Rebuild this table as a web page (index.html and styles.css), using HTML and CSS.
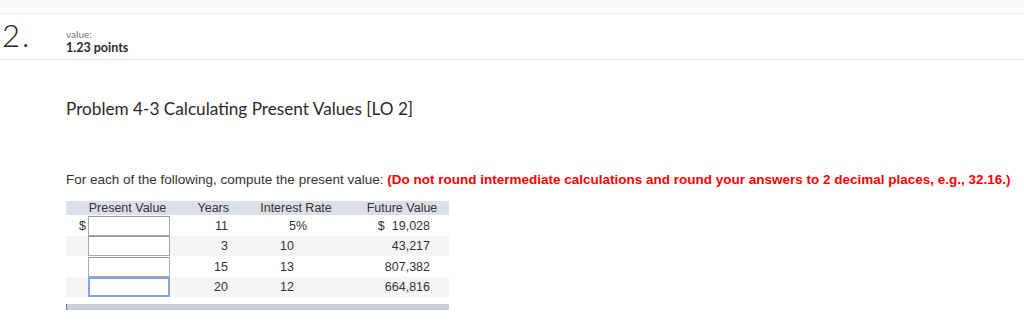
FILE: index.html
```html
<!DOCTYPE html>
<html>
<head>
<meta charset="utf-8">
<link rel="stylesheet" href="styles.css">
</head>
<body>
<div class="topbar"></div>
<div class="qhead">
  <div class="qnum">2.</div>
  <div class="qmeta">
    <div class="qlabel">value:</div>
    <div class="qpoints">1.23 points</div>
  </div>
</div>
<div class="content">
  <h1 class="title">Problem 4-3 Calculating Present Values [LO 2]</h1>
  <p class="instr">For each of the following, compute the present value: <span class="warn">(Do not round intermediate calculations and round your answers to 2 decimal places, e.g., 32.16.)</span></p>
  <table class="pv">
    <thead>
      <tr>
        <th class="c-dol"></th>
        <th class="c-in">Present Value</th>
        <th class="c-yr">Years</th>
        <th class="c-rt">Interest Rate</th>
        <th class="c-fv">Future Value</th>
      </tr>
    </thead>
    <tbody>
      <tr class="r1">
        <td class="c-dol">$</td>
        <td class="c-in"><input type="text" class="box"></td>
        <td class="c-yr">11</td>
        <td class="c-rt center">5%</td>
        <td class="c-fv">$&nbsp; 19,028</td>
      </tr>
      <tr class="alt r2">
        <td class="c-dol"></td>
        <td class="c-in"><input type="text" class="box"></td>
        <td class="c-yr">3</td>
        <td class="c-rt">10</td>
        <td class="c-fv">43,217</td>
      </tr>
      <tr class="r1">
        <td class="c-dol"></td>
        <td class="c-in"><input type="text" class="box"></td>
        <td class="c-yr">15</td>
        <td class="c-rt">13</td>
        <td class="c-fv">807,382</td>
      </tr>
      <tr class="alt r2">
        <td class="c-dol"></td>
        <td class="c-in"><input type="text" class="box focus"></td>
        <td class="c-yr">20</td>
        <td class="c-rt">12</td>
        <td class="c-fv">664,816</td>
      </tr>
    </tbody>
  </table>
  <div class="scrollbar"></div>
</div>
</body>
</html>
```

FILE: styles.css
```css
html, body {
  margin: 0;
  padding: 0;
  background: #ffffff;
}
body {
  width: 1024px;
  height: 328px;
  overflow: hidden;
  color: #333;
}
.topbar {
  height: 12px;
  background: #fafafa;
  border-bottom: 1px solid #ffffff;
  box-shadow: 0 1px 0 #efefef;
}
.qhead {
  display: flex;
  align-items: flex-start;
  height: 45px;
  margin-top: 1px;
  border-bottom: 1px solid #e6e6e6;
}
.qnum {
  width: 66px;
  box-sizing: border-box;
  padding-left: 2px;
  font-family: "Lato", sans-serif;
  font-weight: 300;
  font-size: 31px;
  letter-spacing: 2px;
  line-height: 31px;
  margin-top: 6px;
  color: #222;
}
.qmeta {
  margin-top: 15px;
  font-family: "Lato", sans-serif;
}
.qlabel {
  font-size: 10px;
  line-height: 11px;
  color: #777;
}
.qpoints {
  font-size: 12.5px;
  line-height: 16px;
  font-weight: 700;
  color: #2a2a2a;
}
.content {
  padding-left: 66px;
}
.title {
  margin: 38px 0 0 0;
  font-family: "Lato", sans-serif;
  font-weight: 400;
  font-size: 17.2px;
  line-height: 22px;
  color: #2a2a2a;
}
.instr {
  margin: 52px 0 0 0;
  font-family: "Liberation Sans", Arial, sans-serif;
  font-size: 13.5px;
  line-height: 16px;
  color: #333;
}
.warn {
  color: #ff0000;
  font-weight: 700;
}
.pv {
  margin-top: 13px;
  border-collapse: collapse;
  font-family: "Liberation Sans", Arial, sans-serif;
  font-size: 12.5px;
  color: #333;
  width: 383px;
  table-layout: fixed;
}
.pv th, .pv td {
  box-sizing: border-box;
  padding: 0;
  font-weight: 400;
}
.pv thead tr {
  background: #dcdfe8;
  height: 14px;
}
.pv th {
  line-height: 14px;
}
.pv tbody tr.r1 { height: 21px; }
.pv tbody tr.r2 { height: 20px; }
.pv tbody tr.alt { background: #f5f5f5; }
.c-dol {
  width: 22px;
  text-align: right;
}
.pv td.c-dol { padding-right: 2px; }
.c-in {
  width: 84px;
}
.pv th.c-in { text-align: center; padding-right: 5px; }
.pv td.c-in { text-align: left; }
.c-yr {
  width: 68px;
  text-align: right;
}
.pv td.c-yr { padding-right: 12px; }
.pv th.c-yr { padding-right: 11px; }
.c-rt {
  width: 110px;
}
.pv th.c-rt { text-align: center; padding-left: 2px; }
.pv td.c-rt { text-align: left; padding-left: 40px; }
.pv td.c-rt.center { padding-left: 49px; }
.c-fv {
  width: 99px;
}
.pv th.c-fv { text-align: center; padding-left: 5px; }
.pv td.c-fv { text-align: right; padding-right: 19px; }
.box {
  display: block;
  box-sizing: border-box;
  width: 82px;
  height: 20px;
  margin: 0;
  border: 1px solid #a9a9a9;
  border-top-color: #999;
  background: #fff;
  padding: 0;
  outline: none;
}
.box.focus {
  border: 2px solid #7fa6df;
}
.scrollbar {
  width: 382px;
  height: 6px;
  margin-top: 7px;
  background: #c9cfda;
  border-left: 1px solid #777;
}
```
